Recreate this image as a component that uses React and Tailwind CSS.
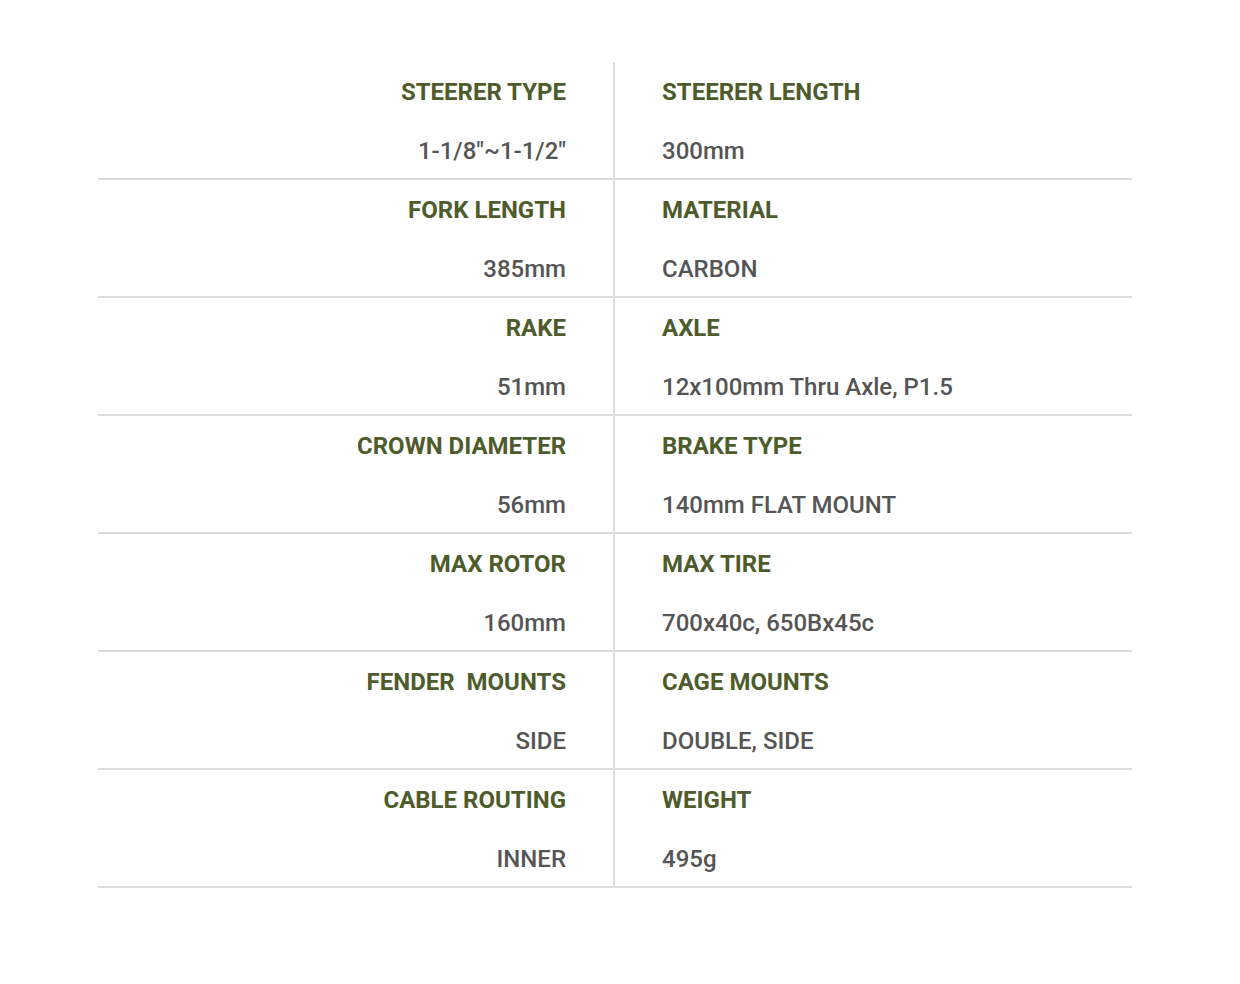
const specs = [
  ['STEERER TYPE', '1-1/8"~1-1/2"', 'STEERER LENGTH', '300mm'],
  ['FORK LENGTH', '385mm', 'MATERIAL', 'CARBON'],
  ['RAKE', '51mm', 'AXLE', '12x100mm Thru Axle, P1.5'],
  ['CROWN DIAMETER', '56mm', 'BRAKE TYPE', '140mm FLAT MOUNT'],
  ['MAX ROTOR', '160mm', 'MAX TIRE', '700x40c, 650Bx45c'],
  ['FENDER  MOUNTS', 'SIDE', 'CAGE MOUNTS', 'DOUBLE, SIDE'],
  ['CABLE ROUTING', 'INNER', 'WEIGHT', '495g'],
]

const Cell = ({ label, value, align }) => (
  <div className={`flex flex-col h-[116px] pt-[15px] ${align === 'right' ? 'items-end pr-[47px]' : 'items-start pl-[47px]'}`}>
    <div className="text-[24px] leading-[30px] font-bold text-[#4e5b2b] whitespace-pre">{label}</div>
    <div className="mt-[29px] text-[24px] leading-[30px] font-medium text-[#555555] whitespace-pre">{value}</div>
  </div>
)

export default function App() {
  return (
    <div className="w-[1240px] h-[984px] bg-white pt-[62px]" style={{ fontFamily: 'Roboto, "Liberation Sans", sans-serif' }}>
      <div className="mx-[98px] w-[1034px]">
        {specs.map(([l1, v1, l2, v2]) => (
          <div key={l1} className="grid grid-cols-2 border-b-2 border-[#dedede]">
            <div className="border-r-2 border-[#dedede]">
              <Cell label={l1} value={v1} align="right" />
            </div>
            <Cell label={l2} value={v2} align="left" />
          </div>
        ))}
      </div>
    </div>
  )
}
